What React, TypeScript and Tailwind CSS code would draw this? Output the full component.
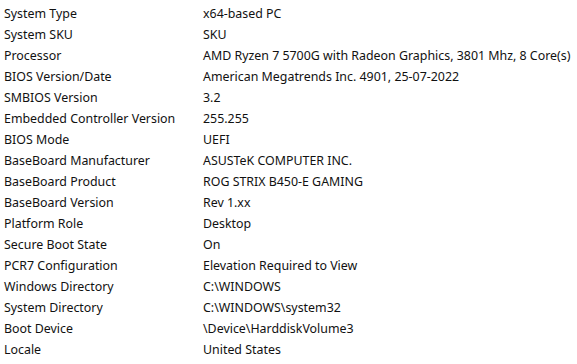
import React from "react";

const rows: [string, string][] = [
  ["System Type", "x64-based PC"],
  ["System SKU", "SKU"],
  ["Processor", "AMD Ryzen 7 5700G with Radeon Graphics, 3801 Mhz, 8 Core(s)"],
  ["BIOS Version/Date", "American Megatrends Inc. 4901, 25-07-2022"],
  ["SMBIOS Version", "3.2"],
  ["Embedded Controller Version", "255.255"],
  ["BIOS Mode", "UEFI"],
  ["BaseBoard Manufacturer", "ASUSTeK COMPUTER INC."],
  ["BaseBoard Product", "ROG STRIX B450-E GAMING"],
  ["BaseBoard Version", "Rev 1.xx"],
  ["Platform Role", "Desktop"],
  ["Secure Boot State", "On"],
  ["PCR7 Configuration", "Elevation Required to View"],
  ["Windows Directory", "C:\\WINDOWS"],
  ["System Directory", "C:\\WINDOWS\\system32"],
  ["Boot Device", "\\Device\\HarddiskVolume3"],
  ["Locale", "United States"],
];

export default function App() {
  return (
    <div className="w-[577px] h-[364px] bg-white overflow-hidden pt-[4px] font-['Noto_Sans',sans-serif] text-[12.4px] text-[#111]">
      {rows.map(([k, v]) => (
        <div key={k} className="flex h-[21px] items-center whitespace-nowrap">
          <div className="w-[203px] pl-[4px]">{k}</div>
          <div>{v}</div>
        </div>
      ))}
    </div>
  );
}
